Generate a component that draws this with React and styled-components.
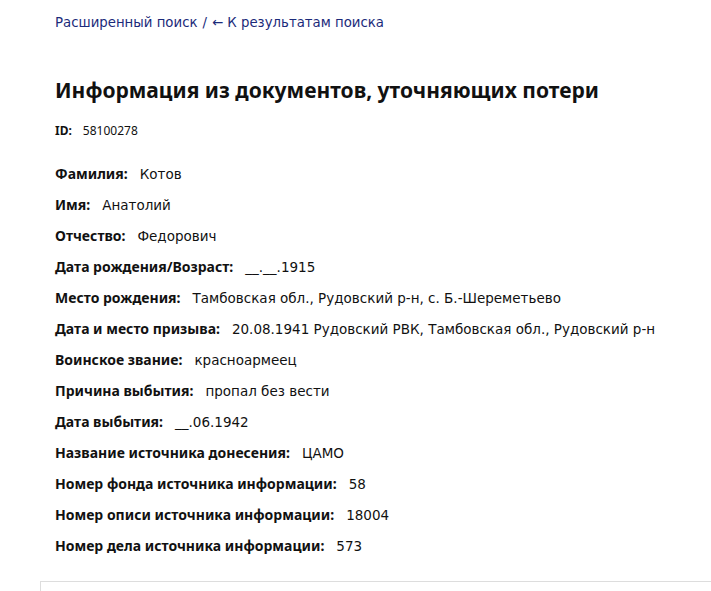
import React from 'react'
import styled, { createGlobalStyle } from 'styled-components'

const GlobalStyle = createGlobalStyle`
  html, body {
    margin: 0;
    padding: 0;
    background: #fff;
  }
  body {
    font-family: "Noto Sans", "Open Sans", sans-serif;
    color: #111;
  }
`

const fields = [
  ['Фамилия', 'Котов'],
  ['Имя', 'Анатолий'],
  ['Отчество', 'Федорович'],
  ['Дата рождения/Возраст', '__.__.1915'],
  ['Место рождения', 'Тамбовская обл., Рудовский р-н, с. Б.-Шереметьево'],
  ['Дата и место призыва', '20.08.1941 Рудовский РВК, Тамбовская обл., Рудовский р-н'],
  ['Воинское звание', 'красноармеец'],
  ['Причина выбытия', 'пропал без вести'],
  ['Дата выбытия', '__.06.1942'],
  ['Название источника донесения', 'ЦАМО'],
  ['Номер фонда источника информации', '58'],
  ['Номер описи источника информации', '18004'],
  ['Номер дела источника информации', '573'],
]

const App = () => {
  return (
    <Page>
      <GlobalStyle />
      <Content>
        <Breadcrumbs>
          <Crumb href="#">Расширенный поиск</Crumb>
          <Sep>/</Sep>
          <Crumb href="#">← К результатам поиска</Crumb>
        </Breadcrumbs>
        <Title>Информация из документов, уточняющих потери</Title>
        <IdLine>
          <IdLabel>ID:</IdLabel>
          <IdValue>58100278</IdValue>
        </IdLine>
        <Fields>
          {fields.map(([label, value]) => (
            <Row key={label}>
              <Label>{label}:</Label>
              <Value>{value}</Value>
            </Row>
          ))}
        </Fields>
      </Content>
      <Panel />
    </Page>
  )
}

export default App

const Page = styled.div`
  width: 100%;
  height: 591px;
  overflow: hidden;
`

const Content = styled.div`
  padding: 14px 0 0 55px;
`

const Breadcrumbs = styled.div`
  display: flex;
  align-items: center;
  gap: 5px;
  font-family: "DejaVu Sans", Verdana, sans-serif;
  font-size: 13.3px;
  line-height: 18px;
  color: #1b2a7a;
`

const Crumb = styled.a`
  color: #1b2a7a;
  text-decoration: none;
`

const Sep = styled.span`
  color: #1b2a7a;
`

const Title = styled.h1`
  margin: 45px 0 0;
  font-size: 21px;
  line-height: 26px;
  font-weight: bold;
  color: #111;
`

const IdLine = styled.div`
  display: flex;
  gap: 11px;
  margin-top: 20px;
  font-size: 12px;
  line-height: 16px;
`

const IdLabel = styled.span`
  font-weight: bold;
`

const IdValue = styled.span``

const Fields = styled.div`
  display: flex;
  flex-direction: column;
  gap: 13px;
  margin-top: 26px;
`

const Row = styled.div`
  display: flex;
  align-items: baseline;
  gap: 12px;
  font-size: 14px;
  line-height: 18px;
`

const Label = styled.span`
  font-weight: bold;
  color: #111;
`

const Value = styled.span`
  font-family: "DejaVu Sans", Verdana, sans-serif;
  font-size: 13.5px;
  color: #111;
`

const Panel = styled.div`
  margin: 26px -2px 0 40px;
  height: 40px;
  border: 1px solid #ddd;
`
